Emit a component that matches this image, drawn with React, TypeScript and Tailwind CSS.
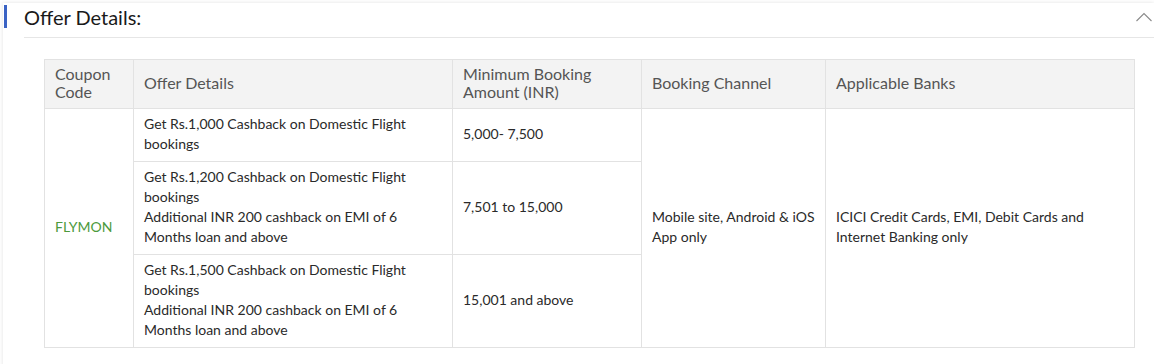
import React from "react";

const td = "border border-[#e2e2e2] px-[10px] align-middle";
const bd = `${td} pt-[5px] pb-[7px]`;

export default function App() {
  return (
    <div className="w-[1154px] h-[364px] bg-white overflow-hidden" style={{ fontFamily: "Lato, 'Open Sans', sans-serif" }}>
      <div className="ml-[3px] mt-[3px] h-[400px] bg-white shadow-[0_0_4px_rgba(0,0,0,0.12)]">
        <div className="relative flex items-center h-[35px] ml-[21px] border-b border-[#e6e6e6]">
          <div className="absolute left-[-20px] top-[2px] w-[3px] h-[23px] bg-[#3b63c4]" />
          <span className="text-[20px] leading-[24px] text-[#1a1a1a] mt-[-6px]">Offer Details:</span>
          <svg className="ml-auto mr-[2px] mt-[-7px]" width="16" height="10" viewBox="0 0 16 10">
            <path d="M0.5 9 L8 1.5 L15.5 9" fill="none" stroke="#8a8a8a" strokeWidth="1.1" />
          </svg>
        </div>
        <div className="pl-[41px] pt-[21px]">
          <table className="border-collapse w-[1091px] text-[14px] leading-[20px] text-[#2a2a2a]">
            <colgroup>
              <col className="w-[89px]" />
              <col className="w-[319px]" />
              <col className="w-[189px]" />
              <col className="w-[184px]" />
              <col className="w-[309px]" />
            </colgroup>
            <thead>
              <tr className="bg-[#f3f3f3] text-[16px] leading-[18px] text-[#555] h-[49px]">
                <th className={`${td} pb-[2px] font-normal text-left`}>Coupon<br />Code</th>
                <th className={`${td} pb-[2px] font-normal text-left`}>Offer Details</th>
                <th className={`${td} pb-[2px] font-normal text-left`}>Minimum Booking<br />Amount (INR)</th>
                <th className={`${td} pb-[2px] font-normal text-left`}>Booking Channel</th>
                <th className={`${td} pb-[2px] font-normal text-left`}>Applicable Banks</th>
              </tr>
            </thead>
            <tbody>
              <tr className="h-[53px]">
                <td rowSpan={3} className={`${bd} text-[#4c9a3c]`}>FLYMON</td>
                <td className={bd}>Get Rs.1,000 Cashback on Domestic Flight<br />bookings</td>
                <td className={bd}>5,000- 7,500</td>
                <td rowSpan={3} className={bd}>Mobile site, Android &amp; iOS<br />App only</td>
                <td rowSpan={3} className={bd}>ICICI Credit Cards, EMI, Debit Cards and<br />Internet Banking only</td>
              </tr>
              <tr className="h-[93px]">
                <td className={bd}>Get Rs.1,200 Cashback on Domestic Flight<br />bookings<br />Additional INR 200 cashback on EMI of 6<br />Months loan and above</td>
                <td className={bd}>7,501 to 15,000</td>
              </tr>
              <tr className="h-[93px]">
                <td className={bd}>Get Rs.1,500 Cashback on Domestic Flight<br />bookings<br />Additional INR 200 cashback on EMI of 6<br />Months loan and above</td>
                <td className={bd}>15,001 and above</td>
              </tr>
            </tbody>
          </table>
        </div>
      </div>
    </div>
  );
}
